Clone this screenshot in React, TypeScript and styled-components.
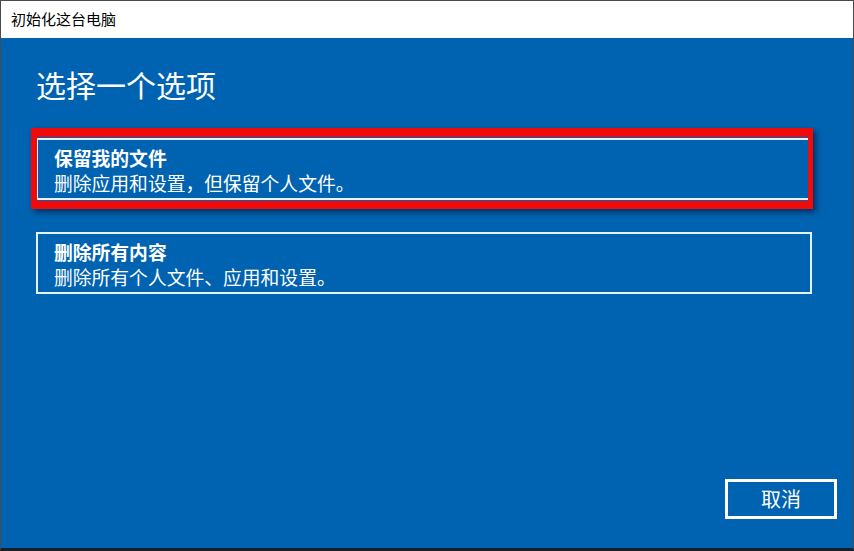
import React from "react";
import styled, { createGlobalStyle } from "styled-components";

const GlobalStyle = createGlobalStyle`
    html, body {
        margin: 0;
        padding: 0;
        background: #ffffff;
    }
    body {
        font-family: "Noto Sans CJK SC", "Noto Sans", sans-serif;
    }
`;

type Option = {
    title: string;
    desc: string;
    marked?: boolean;
};

const options: Option[] = [
    { title: "保留我的文件", desc: "删除应用和设置，但保留个人文件。", marked: true },
    { title: "删除所有内容", desc: "删除所有个人文件、应用和设置。" },
];

const App = () => {
    return (
        <>
            <GlobalStyle />
            <Window>
                <TitleBar>初始化这台电脑</TitleBar>
                <Body>
                    <Heading>选择一个选项</Heading>
                    <OptionList>
                        {options.map(o => (
                            <OptionCard key={o.title}>
                                <OptionTitle>{o.title}</OptionTitle>
                                <OptionDesc>{o.desc}</OptionDesc>
                                {o.marked && <RedMark />}
                            </OptionCard>
                        ))}
                    </OptionList>
                    <Footer>
                        <CancelButton type="button">取消</CancelButton>
                    </Footer>
                </Body>
            </Window>
        </>
    );
};

const Window = styled.div`
    width: 854px;
    height: 551px;
    box-sizing: border-box;
    display: flex;
    flex-direction: column;
    border-top: 1px solid #4a4a4a;
    border-left: 1px solid #4a4a4a;
    border-right: 1px solid #4a4a4a;
    border-bottom: 3px solid #16202a;
    overflow: hidden;
`;

const TitleBar = styled.div`
    height: 37px;
    flex: none;
    display: flex;
    align-items: center;
    padding-left: 10px;
    background: #ffffff;
    color: #000000;
    font-size: 15px;
    line-height: 20px;
    padding-bottom: 2px;
    box-sizing: border-box;
`;

const Body = styled.div`
    flex: 1;
    display: flex;
    flex-direction: column;
    background: #0063b1;
    padding: 28px 16px 29px 35px;
    box-sizing: border-box;
`;

const Heading = styled.h1`
    margin: 0;
    color: #ffffff;
    font-size: 30px;
    font-weight: 400;
    line-height: 36px;
`;

const OptionList = styled.div`
    display: flex;
    flex-direction: column;
    gap: 32px;
    margin-top: 36px;
`;

const OptionCard = styled.div`
    position: relative;
    width: 776px;
    height: 62px;
    box-sizing: border-box;
    border: 2px solid #e4f3ff;
    padding: 5px 16px 0 16px;
    color: #ffffff;
`;

const OptionTitle = styled.div`
    font-size: 18.8px;
    font-weight: 700;
    line-height: 25px;
`;

const OptionDesc = styled.div`
    font-size: 18.8px;
    font-weight: 400;
    line-height: 25px;
`;

const RedMark = styled.div`
    position: absolute;
    left: -7px;
    top: -12px;
    right: -3px;
    bottom: -11px;
    border-style: solid;
    border-color: #f00a0a;
    border-width: 9px 5px 8px 6px;
    box-shadow: 3px 3px 6px rgba(0, 10, 40, 0.6);
    pointer-events: none;
`;

const Footer = styled.div`
    margin-top: auto;
    display: flex;
    justify-content: flex-end;
`;

const CancelButton = styled.button`
    width: 112px;
    height: 40px;
    box-sizing: border-box;
    border: 3px solid #ffffff;
    background: transparent;
    color: #ffffff;
    font-family: "Noto Sans CJK SC", "Noto Sans", sans-serif;
    font-size: 20px;
    line-height: 24px;
    padding: 0;
`;

export default App;
